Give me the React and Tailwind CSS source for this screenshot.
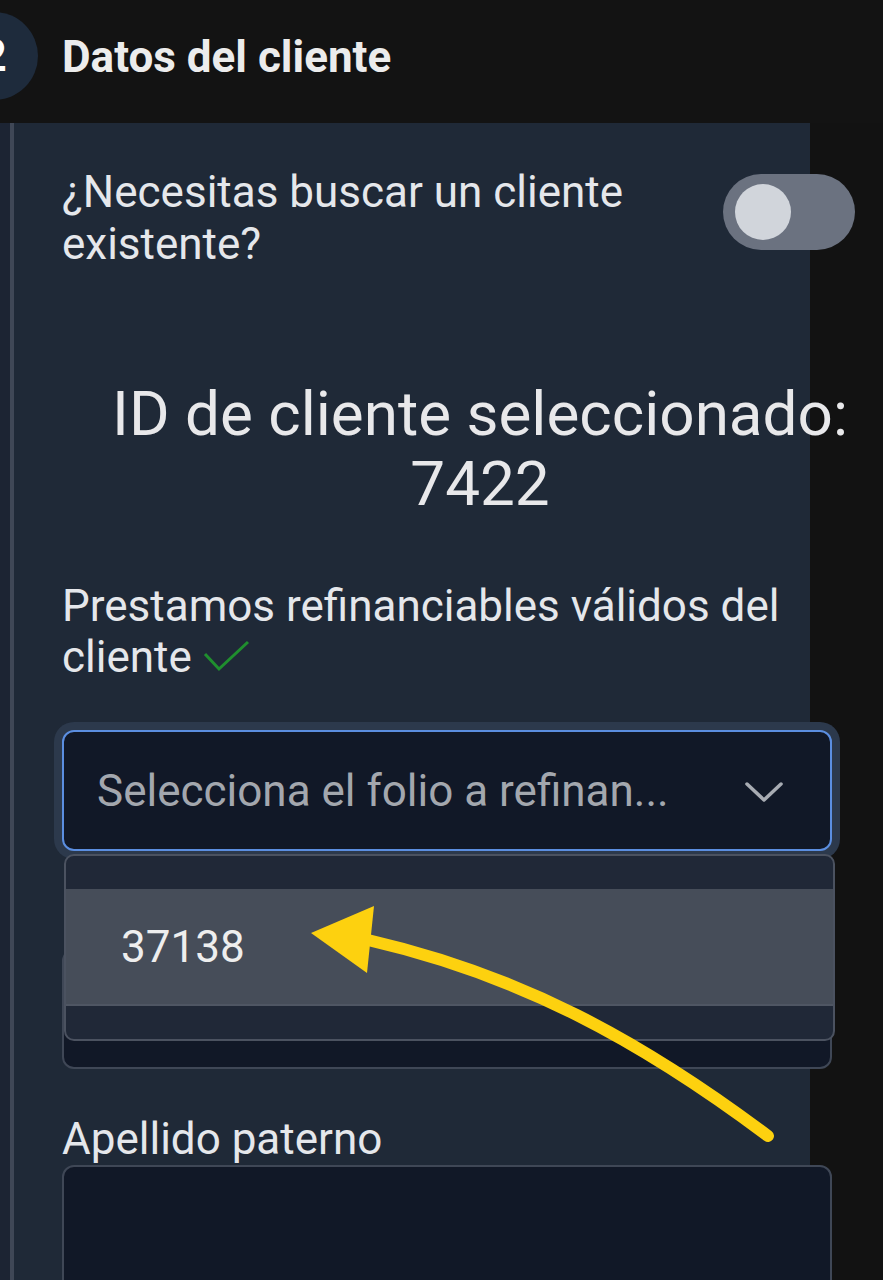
import React from "react";

export default function App() {
  return (
    <div className="relative w-[883px] h-[1280px] overflow-hidden bg-[#121212] font-['Roboto',_'Liberation_Sans',_sans-serif] text-[#e5e7eb]">
      {/* Header */}
      <div className="flex items-center h-[123px] bg-[#131313]">
        <div className="flex items-center justify-center w-[88px] h-[88px] -ml-[50px] -mt-[12px] rounded-full bg-[#1e2b3c] shrink-0">
          <span className="text-[44px] font-bold text-white leading-none">2</span>
        </div>
        <h1 className="ml-[24px] -mt-[10px] text-[44px] font-bold leading-none text-[#ececec]">Datos del cliente</h1>
      </div>

      {/* Body */}
      <div className="flex">
        <div className="w-[10px] shrink-0 bg-[#1c2433]" />
        <div className="w-[800px] shrink-0 border-l-[4px] border-[#3f4756] bg-[#1f2937] pl-[48px] min-h-[1157px]">
          {/* Toggle row */}
          <div className="flex items-start w-[793px] pt-[43px]">
            <p className="w-[600px] text-[44px] leading-[52px]">¿Necesitas buscar un cliente existente?</p>
            <div className="ml-auto mt-[8px] flex items-center w-[132px] h-[76px] rounded-full bg-[#6b7280] pl-[12px]">
              <div className="w-[56px] h-[56px] rounded-full bg-[#d1d5db]" />
            </div>
          </div>

          {/* ID */}
          <div className="w-[836px] mt-[109px] text-center text-[62px] leading-[70px] text-[#e8e8ea]">
            <div>ID de cliente seleccionado:</div>
            <div>7422</div>
          </div>

          {/* Prestamos */}
          <p className="mt-[62px] w-[760px] text-[44px] leading-[51px]">
            Prestamos refinanciables válidos del cliente
            <svg className="inline-block ml-[10px] align-baseline" width="48" height="32" viewBox="0 0 48 32">
              <polyline points="3,14 17,29 46,2" fill="none" stroke="#1f8f2e" strokeWidth="3" />
            </svg>
          </p>

          {/* Select */}
          <div className="relative mt-[47px] w-[770px]">
            <div className="flex items-center h-[121px] rounded-[12px] border-2 border-[#5b8ee0] bg-[#111827] shadow-[0_0_0_8px_#2c394c] pl-[33px] pr-[46px]">
              <span className="flex-1 text-[44px] text-[#a3a7ae] leading-none">Selecciona el folio a refinan...</span>
              <svg width="40" height="24" viewBox="0 0 40 24">
                <polyline points="3,5 20,21 37,5" fill="none" stroke="#a8acb3" strokeWidth="3.5" strokeLinecap="round" strokeLinejoin="round" />
              </svg>
            </div>

            {/* Hidden field under dropdown */}
            <div className="mt-[98px] h-[120px] rounded-[12px] border-2 border-[#3f4756] bg-[#111827]" />

            {/* Dropdown */}
            <div className="absolute left-[2px] top-[124px] w-[771px] h-[187px] rounded-[10px] border-2 border-[#4b5260] bg-[#202837] py-[33px] z-10 overflow-hidden">
              <div className="flex items-center h-[117px] bg-[#464d59] pl-[55px] border-b-2 border-[#4f5663]">
                <span className="text-[44px] leading-none text-[#eeeeee]">37138</span>
              </div>
            </div>
          </div>

          {/* Apellido paterno */}
          <p className="mt-[44px] text-[44px] leading-[52px]">Apellido paterno</p>
          <div className="w-[770px] h-[140px] rounded-[12px] border-2 border-[#3f4756] bg-[#111827]" />
        </div>
      </div>

      {/* Annotation arrow */}
      <svg className="absolute left-0 top-0 pointer-events-none z-20" width="883" height="1280" viewBox="0 0 883 1280">
        <path d="M768 1136 C 640 1040, 520 975, 368 940" fill="none" stroke="#fdd10f" strokeWidth="12" strokeLinecap="round" />
        <polygon points="311,933 374,906 367,973" fill="#fdd10f" />
      </svg>
    </div>
  );
}
